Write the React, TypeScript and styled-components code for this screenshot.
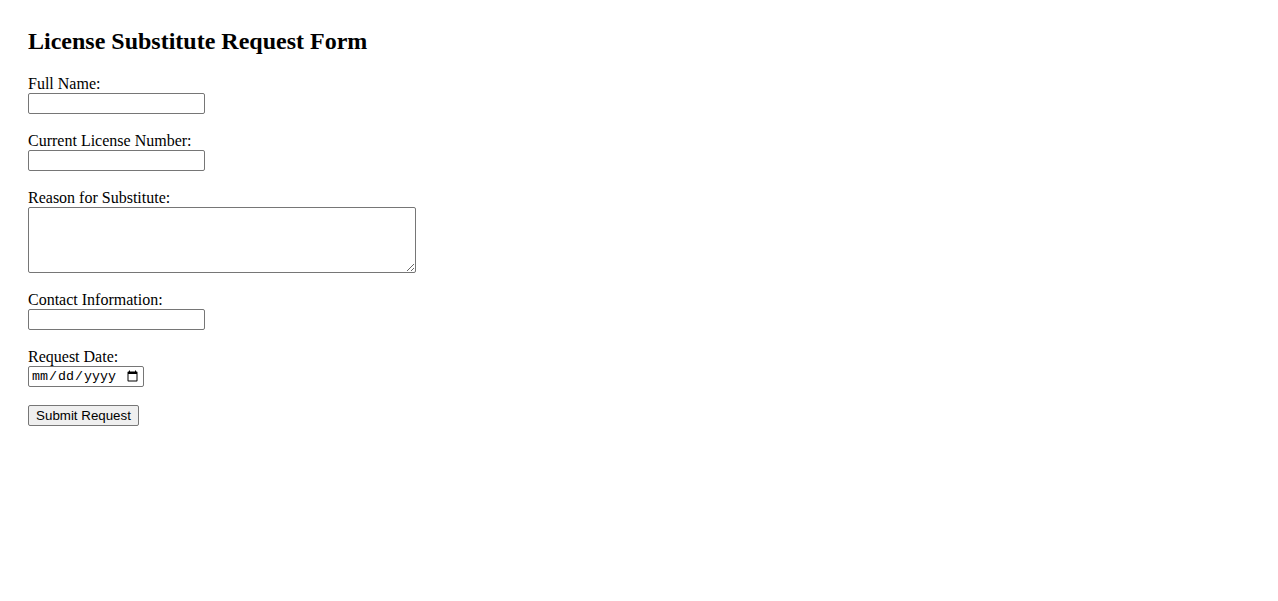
import React from 'react';
import styled, { createGlobalStyle } from 'styled-components';

const GlobalStyle = createGlobalStyle`
  body {
    margin: 8px;
    padding: 20px;
    background: #ffffff;
    color: #000000;
    font-family: 'Liberation Serif', 'Times New Roman', serif;
    font-size: 16px;
  }
`;

const Title = styled.h2`
  margin: 0 0 20px;
  font-size: 24px;
  line-height: 26.5px;
  font-weight: bold;
`;

const FormGroup = styled.div`
  margin-bottom: 17.5px;
`;

const Label = styled.label`
  display: block;
  font-size: 16px;
  line-height: 18.5px;
`;

const fieldBase = `
  display: block;
  box-sizing: border-box;
  margin: 0;
  border: 1px solid #767676;
  border-radius: 2px;
  background: #ffffff;
  color: #000000;
  padding: 1px 2px;
  height: 21px;
`;

const TextInput = styled.input`
  ${fieldBase}
  width: 177px;
  font: 13.333px 'Liberation Sans', Arial, sans-serif;
`;

const DateInput = styled.input`
  ${fieldBase}
  width: 116px;
  font: 13.333px 'Liberation Mono', 'DejaVu Sans Mono', monospace;
`;

const TextArea = styled.textarea`
  display: block;
  box-sizing: border-box;
  margin: 0;
  width: 388px;
  height: 66px;
  border: 1px solid #767676;
  border-radius: 2px;
  padding: 2px;
  font: 13.333px 'Liberation Mono', monospace;
`;

const SubmitButton = styled.button`
  display: block;
  box-sizing: border-box;
  margin: 0;
  width: 111px;
  height: 21px;
  padding: 1px 6px;
  border: 1px solid #767676;
  border-radius: 2px;
  background: #efefef;
  color: #000000;
  font: 13.333px 'Liberation Sans', Arial, sans-serif;
`;

const fields = [
  { id: 'fullName', label: 'Full Name:' },
  { id: 'licenseNumber', label: 'Current License Number:' },
];

export default function App() {
  return (
    <>
      <GlobalStyle />
      <Title>License Substitute Request Form</Title>
      <form onSubmit={(e) => e.preventDefault()}>
        {fields.map((f) => (
          <FormGroup key={f.id}>
            <Label htmlFor={f.id}>{f.label}</Label>
            <TextInput type="text" id={f.id} name={f.id} />
          </FormGroup>
        ))}
        <FormGroup>
          <Label htmlFor="reason">Reason for Substitute:</Label>
          <TextArea id="reason" name="reason" />
        </FormGroup>
        <FormGroup>
          <Label htmlFor="contact">Contact Information:</Label>
          <TextInput type="text" id="contact" name="contact" />
        </FormGroup>
        <FormGroup>
          <Label htmlFor="requestDate">Request Date:</Label>
          <DateInput type="date" id="requestDate" name="requestDate" />
        </FormGroup>
        <SubmitButton type="submit">Submit Request</SubmitButton>
      </form>
    </>
  );
}
